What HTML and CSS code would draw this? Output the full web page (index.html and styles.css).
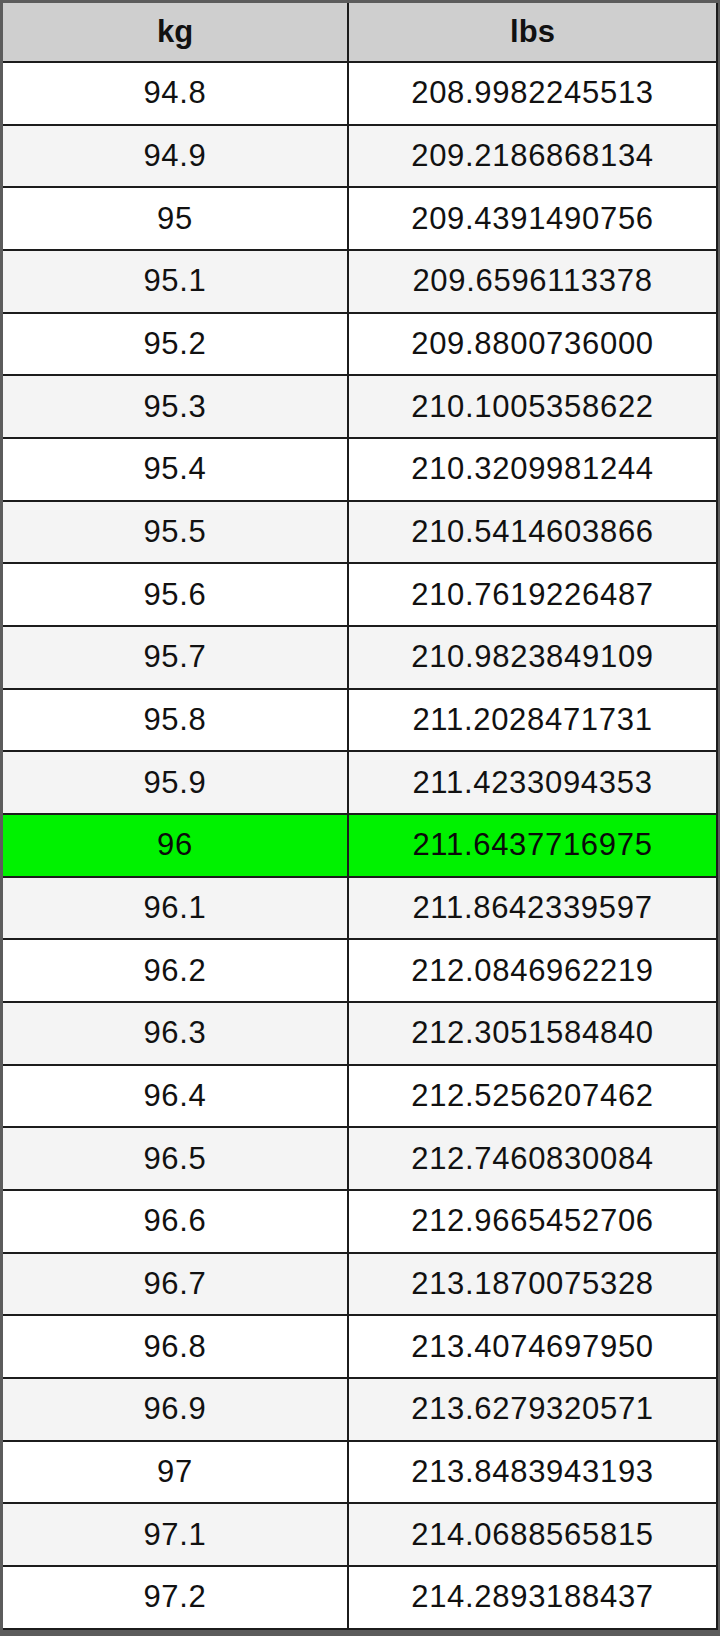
FILE: index.html
```html
<!DOCTYPE html>
<html>
<head>
<meta charset="utf-8">
<link rel="stylesheet" href="styles.css">
</head>
<body>
<div class="frame">
  <div class="table">
    <div class="cell head">kg</div><div class="cell head">lbs</div>
    <div class="cell">94.8</div><div class="cell">208.9982245513</div>
    <div class="cell alt">94.9</div><div class="cell alt">209.2186868134</div>
    <div class="cell">95</div><div class="cell">209.4391490756</div>
    <div class="cell alt">95.1</div><div class="cell alt">209.6596113378</div>
    <div class="cell">95.2</div><div class="cell">209.8800736000</div>
    <div class="cell alt">95.3</div><div class="cell alt">210.1005358622</div>
    <div class="cell">95.4</div><div class="cell">210.3209981244</div>
    <div class="cell alt">95.5</div><div class="cell alt">210.5414603866</div>
    <div class="cell">95.6</div><div class="cell">210.7619226487</div>
    <div class="cell alt">95.7</div><div class="cell alt">210.9823849109</div>
    <div class="cell">95.8</div><div class="cell">211.2028471731</div>
    <div class="cell alt">95.9</div><div class="cell alt">211.4233094353</div>
    <div class="cell hl">96</div><div class="cell hl">211.6437716975</div>
    <div class="cell alt">96.1</div><div class="cell alt">211.8642339597</div>
    <div class="cell">96.2</div><div class="cell">212.0846962219</div>
    <div class="cell alt">96.3</div><div class="cell alt">212.3051584840</div>
    <div class="cell">96.4</div><div class="cell">212.5256207462</div>
    <div class="cell alt">96.5</div><div class="cell alt">212.7460830084</div>
    <div class="cell">96.6</div><div class="cell">212.9665452706</div>
    <div class="cell alt">96.7</div><div class="cell alt">213.1870075328</div>
    <div class="cell">96.8</div><div class="cell">213.4074697950</div>
    <div class="cell alt">96.9</div><div class="cell alt">213.6279320571</div>
    <div class="cell">97</div><div class="cell">213.8483943193</div>
    <div class="cell alt">97.1</div><div class="cell alt">214.0688565815</div>
    <div class="cell">97.2</div><div class="cell">214.2893188437</div>
  </div>
</div>
</body>
</html>
```
FILE: styles.css
```css
html, body {
  margin: 0;
  padding: 0;
}
body {
  width: 720px;
  height: 1636px;
  background: #5c5c5c;
  font-family: "Liberation Sans", Arial, sans-serif;
}
.frame {
  box-sizing: border-box;
  width: 720px;
  height: 1636px;
  padding: 3px 2px 6px 3px;
  background: #5c5c5c;
}
.table {
  display: grid;
  grid-template-columns: 344px 367px;
  grid-template-rows: 58px;
  grid-auto-rows: 60.68px;
  gap: 2px;
  padding: 0 2px 2px 0;
  background: #1c1c1c;
}
.cell {
  display: flex;
  align-items: center;
  justify-content: center;
  background: #ffffff;
  color: #111111;
  font-size: 31px;
  letter-spacing: 0.7px;
}
.cell.alt {
  background: #f4f4f4;
}
.cell.head {
  background: #cfcfcf;
  font-weight: bold;
  letter-spacing: 0;
}
.cell.hl {
  background: #00f200;
  color: #0a0a0a;
}
```
